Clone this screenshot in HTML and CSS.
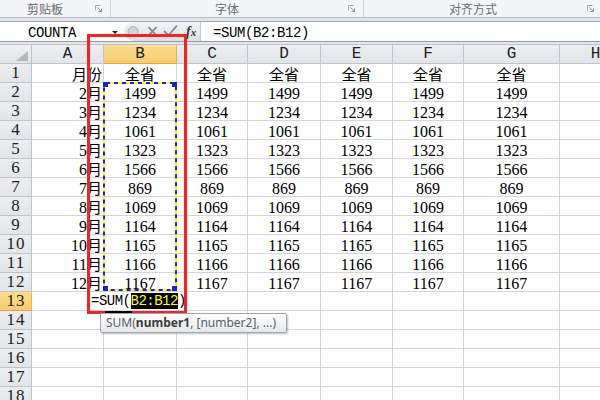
FILE: index.html
```html
<!DOCTYPE html>
<html lang="zh-CN">
<head>
<meta charset="utf-8">
<title>Excel SUM</title>
<link rel="stylesheet" href="styles.css">
</head>
<body>
<div class="app">
  <div class="ribbon">
    <div class="group g1"><span class="glabel">剪贴板</span><svg class="launcher" width="7" height="7" viewBox="0 0 7 7"><path d="M0.5 5.5V0.5H5.5" fill="none" stroke="#a3a9b0"/><path d="M2.5 2.5L6 6M6.5 3.5V6.5H3.5" fill="none" stroke="#8c929a"/></svg></div>
    <div class="group g2"><span class="glabel">字体</span><svg class="launcher" width="7" height="7" viewBox="0 0 7 7"><path d="M0.5 5.5V0.5H5.5" fill="none" stroke="#a3a9b0"/><path d="M2.5 2.5L6 6M6.5 3.5V6.5H3.5" fill="none" stroke="#8c929a"/></svg></div>
    <div class="group g3"><span class="glabel">对齐方式</span><svg class="launcher" width="7" height="7" viewBox="0 0 7 7"><path d="M0.5 5.5V0.5H5.5" fill="none" stroke="#a3a9b0"/><path d="M2.5 2.5L6 6M6.5 3.5V6.5H3.5" fill="none" stroke="#8c929a"/></svg></div>
  </div>

  <div class="fbar">
    <div class="namebox"><span class="nb-text">COUNTA</span><span class="nb-arrow"></span></div>
    <div class="pill">
      <svg class="pill-icons" width="56" height="19" viewBox="0 0 56 19">
        <circle cx="9" cy="9.5" r="5" fill="#d3d7dc" stroke="#a8adb4"/>
        <path d="M24.5 5L32.5 13.5M32.5 5L24.5 13.5" stroke="#7f848b" stroke-width="1.8" fill="none"/>
        <path d="M40 9L44.5 13.5L53 3.5" stroke="#7f848b" stroke-width="1.8" fill="none"/>
      </svg>
      <span class="fx">f<span class="fx-x">x</span></span>
    </div>
    <div class="formula">=SUM(B2:B12)</div>
  </div>

  <div class="sheet">
    <div class="grid">
      <div class="c h corner"><svg width="12" height="10" viewBox="0 0 12 10"><polygon points="12,0 12,10 0,10" fill="#b5bac0"/></svg></div>
      <div class="c h ch">A</div><div class="c h ch sel">B</div><div class="c h ch">C</div><div class="c h ch">D</div><div class="c h ch">E</div><div class="c h ch">F</div><div class="c h ch">G</div><div class="c h ch">H</div>

      <div class="c h rh">1</div><div class="c a"><span class="zh">月份</span></div><div class="c"><span class="zh">全省</span></div><div class="c"><span class="zh">全省</span></div><div class="c"><span class="zh">全省</span></div><div class="c"><span class="zh">全省</span></div><div class="c"><span class="zh">全省</span></div><div class="c"><span class="zh">全省</span></div><div class="c"></div>

      <div class="c h rh">2</div><div class="c a">2<span class="zh">月</span></div><div class="c">1499</div><div class="c">1499</div><div class="c">1499</div><div class="c">1499</div><div class="c">1499</div><div class="c">1499</div><div class="c"></div>

      <div class="c h rh">3</div><div class="c a">3<span class="zh">月</span></div><div class="c">1234</div><div class="c">1234</div><div class="c">1234</div><div class="c">1234</div><div class="c">1234</div><div class="c">1234</div><div class="c"></div>

      <div class="c h rh">4</div><div class="c a">4<span class="zh">月</span></div><div class="c">1061</div><div class="c">1061</div><div class="c">1061</div><div class="c">1061</div><div class="c">1061</div><div class="c">1061</div><div class="c"></div>

      <div class="c h rh">5</div><div class="c a">5<span class="zh">月</span></div><div class="c">1323</div><div class="c">1323</div><div class="c">1323</div><div class="c">1323</div><div class="c">1323</div><div class="c">1323</div><div class="c"></div>

      <div class="c h rh">6</div><div class="c a">6<span class="zh">月</span></div><div class="c">1566</div><div class="c">1566</div><div class="c">1566</div><div class="c">1566</div><div class="c">1566</div><div class="c">1566</div><div class="c"></div>

      <div class="c h rh">7</div><div class="c a">7<span class="zh">月</span></div><div class="c">869</div><div class="c">869</div><div class="c">869</div><div class="c">869</div><div class="c">869</div><div class="c">869</div><div class="c"></div>

      <div class="c h rh">8</div><div class="c a">8<span class="zh">月</span></div><div class="c">1069</div><div class="c">1069</div><div class="c">1069</div><div class="c">1069</div><div class="c">1069</div><div class="c">1069</div><div class="c"></div>

      <div class="c h rh">9</div><div class="c a">9<span class="zh">月</span></div><div class="c">1164</div><div class="c">1164</div><div class="c">1164</div><div class="c">1164</div><div class="c">1164</div><div class="c">1164</div><div class="c"></div>

      <div class="c h rh">10</div><div class="c a">10<span class="zh">月</span></div><div class="c">1165</div><div class="c">1165</div><div class="c">1165</div><div class="c">1165</div><div class="c">1165</div><div class="c">1165</div><div class="c"></div>

      <div class="c h rh">11</div><div class="c a">11<span class="zh">月</span></div><div class="c">1166</div><div class="c">1166</div><div class="c">1166</div><div class="c">1166</div><div class="c">1166</div><div class="c">1166</div><div class="c"></div>

      <div class="c h rh">12</div><div class="c a">12<span class="zh">月</span></div><div class="c">1167</div><div class="c">1167</div><div class="c">1167</div><div class="c">1167</div><div class="c">1167</div><div class="c">1167</div><div class="c"></div>

      <div class="c h rh sel">13</div><div class="c"></div><div class="c"></div><div class="c"></div><div class="c"></div><div class="c"></div><div class="c"></div><div class="c"></div><div class="c"></div>

      <div class="c h rh">14</div><div class="c"></div><div class="c"></div><div class="c"></div><div class="c"></div><div class="c"></div><div class="c"></div><div class="c"></div><div class="c"></div>

      <div class="c h rh">15</div><div class="c"></div><div class="c"></div><div class="c"></div><div class="c"></div><div class="c"></div><div class="c"></div><div class="c"></div><div class="c"></div>

      <div class="c h rh">16</div><div class="c"></div><div class="c"></div><div class="c"></div><div class="c"></div><div class="c"></div><div class="c"></div><div class="c"></div><div class="c"></div>

      <div class="c h rh">17</div><div class="c"></div><div class="c"></div><div class="c"></div><div class="c"></div><div class="c"></div><div class="c"></div><div class="c"></div><div class="c"></div>

      <div class="c h rh">18</div><div class="c"></div><div class="c"></div><div class="c"></div><div class="c"></div><div class="c"></div><div class="c"></div><div class="c"></div><div class="c"></div>
    </div>
  </div>

  <svg class="ants" width="74" height="209" viewBox="0 0 74 209">
    <rect x="1" y="1" width="72" height="207" rx="2" fill="none" stroke="#ffff00" stroke-width="2"/>
    <rect x="1" y="1" width="72" height="207" rx="2" fill="none" stroke="#1c1cf0" stroke-width="2" stroke-dasharray="4 4"/>
    <rect x="0" y="0" width="5" height="5" fill="#1c1ce6"/>
    <rect x="69" y="0" width="5" height="5" fill="#1c1ce6"/>
    <rect x="0" y="204" width="5" height="5" fill="#1c1ce6"/>
    <rect x="69" y="204" width="5" height="5" fill="#1c1ce6"/>
  </svg>

  <div class="editor">=SUM(<span class="hl">B2:B12</span>)</div>
  <div class="redbox"></div>
  <div class="cursorbar"></div>
  <div class="tooltip">SUM(<b>number1</b>, [number2], ...)</div>
</div>
</body>
</html>
```

FILE: styles.css
```css
html, body {
  margin: 0;
  padding: 0;
  width: 600px;
  height: 400px;
  overflow: hidden;
}

.app {
  position: relative;
  width: 600px;
  height: 400px;
  overflow: hidden;
  background: #e3e7ec;
}

/* ribbon group labels */
.ribbon {
  display: flex;
  height: 18px;
  box-sizing: border-box;
  border-bottom: 1px solid #b6bdc6;
  background: #f3f5f8;
}
.group {
  display: flex;
  align-items: center;
  box-sizing: border-box;
  border-right: 1px solid #d3d7dc;
  padding-right: 8px;
}
.g1 { width: 111px; }
.g2 { width: 253px; }
.g3 { flex: 1; border-right: none; padding-right: 6px; }
.glabel {
  flex: 1;
  text-align: center;
  padding-right: 5px;
  font: 12px/17px "Noto Sans CJK SC", sans-serif;
  color: #676c74;
}
.launcher { flex: none; }

/* formula bar */
.fbar {
  display: flex;
  margin-top: 3px;
  height: 21px;
  box-sizing: border-box;
  border-top: 1px solid #a0a6ad;
  border-bottom: 1px solid #959ba2;
  background: #fff;
}
.namebox {
  display: flex;
  align-items: center;
  width: 122px;
}
.nb-text {
  padding-left: 28px;
  padding-top: 3px;
  font: 14px/16px "Liberation Mono", monospace;
  letter-spacing: -0.4px;
  color: #000;
}
.nb-arrow {
  margin-left: auto;
  margin-right: 4px;
  margin-top: 1px;
  width: 0;
  height: 0;
  border-left: 3px solid transparent;
  border-right: 3px solid transparent;
  border-top: 3px solid #222;
}
.pill {
  display: flex;
  align-items: center;
  width: 77px;
  margin-left: 2px;
  box-sizing: border-box;
  border-radius: 10px 0 0 10px;
  border-right: 1px solid #c3c8ce;
  background: linear-gradient(#f1f3f6, #dde1e6);
}
.pill-icons { flex: none; }
.fx {
  margin-left: 6px;
  font: italic bold 14px/17px "Liberation Serif", serif;
  color: #3a3a3a;
}
.fx-x { font-size: 11px; }
.formula {
  flex: 1;
  padding-left: 12px;
  padding-top: 3px;
  font: 14px/16px "Liberation Mono", monospace;
  letter-spacing: -0.4px;
  color: #000;
}

/* sheet grid */
.sheet {
  margin-top: 2px;
  border-top: 1px solid #bfc4ca;
  background: #fff;
}
.grid {
  display: grid;
  grid-template-columns: 32px 72px 73px 71px 73px 72px 71px 96px 72px;
  grid-auto-rows: 19px;
  width: 632px;
}
.c {
  box-sizing: border-box;
  border-right: 1px solid #d6d6d6;
  border-bottom: 1px solid #d6d6d6;
  padding-top: 2px;
  font: 16px/18px "Liberation Serif", "Noto Sans CJK SC", serif;
  text-align: center;
  white-space: nowrap;
  color: #000;
}
.c.a {
  text-align: right;
  padding-right: 1px;
}
.zh {
  font-family: "Noto Sans CJK SC", sans-serif;
  font-size: 15px;
  line-height: 15px;
}
.h {
  background: linear-gradient(#eceef1, #e2e5e9);
  border-right-color: #bfc4ca;
  border-bottom-color: #bfc4ca;
}
.ch {
  padding-top: 1px;
  font: 16px/17px "Liberation Mono", monospace;
  color: #222;
}
.rh {
  padding-top: 0;
  font: 17px/17px "Liberation Serif", serif;
  letter-spacing: 1px;
  text-indent: 1px;
  color: #222;
}
.sel {
  background: linear-gradient(#fbdd8c, #f7cd6d);
  border-right-color: #e2b35a;
  border-bottom-color: #e3a43a;
}
.corner {
  display: flex;
  justify-content: flex-end;
  align-items: flex-end;
  padding: 0 3px 2px 0;
}

/* overlays */
.ants {
  position: absolute;
  left: 103px;
  top: 82px;
}
.editor {
  position: absolute;
  left: 88px;
  top: 292px;
  width: 97px;
  height: 18px;
  box-sizing: border-box;
  padding-left: 3px;
  padding-top: 1px;
  background: #fff;
  font: 14px/17px "Liberation Mono", monospace;
  letter-spacing: -0.5px;
  white-space: nowrap;
  color: #000;
}
.hl {
  background: #000;
  color: #ffff00;
}
.redbox {
  position: absolute;
  left: 87px;
  top: 34px;
  width: 100px;
  height: 280px;
  box-sizing: border-box;
  border: 3px solid #fb2020;
}
.cursorbar {
  position: absolute;
  left: 105px;
  top: 311px;
  width: 27px;
  height: 3px;
  background: #000;
}
.tooltip {
  position: absolute;
  left: 100px;
  top: 313px;
  width: 187px;
  height: 20px;
  box-sizing: border-box;
  padding-left: 5px;
  border: 1px solid #a2a7ae;
  border-radius: 2px;
  background: linear-gradient(#ffffff, #e5e7eb);
  box-shadow: 1px 1px 2px rgba(0, 0, 0, 0.25);
  font: 12px/18px "Noto Sans", sans-serif;
  color: #5a5f66;
  white-space: nowrap;
}
.tooltip b {
  color: #3b3b3b;
}
```
